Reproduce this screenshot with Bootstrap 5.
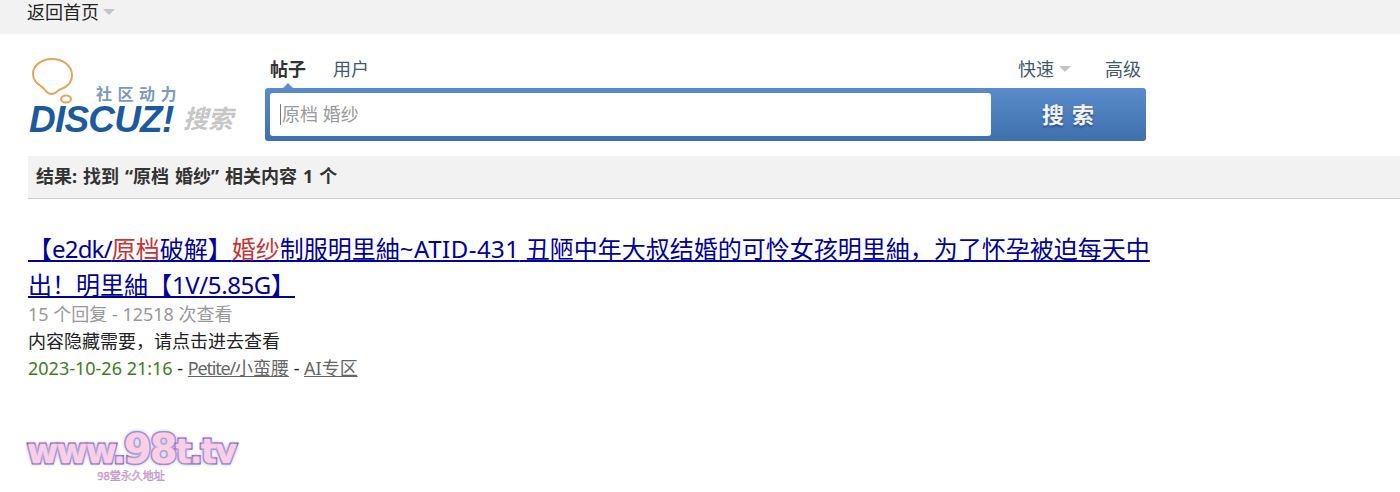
<!DOCTYPE html>
<html lang="zh">
<head>
    <meta charset="UTF-8">
    <meta name="viewport" content="width=device-width, initial-scale=1.0">
    <title>搜索</title>
    <link href="https://cdn.jsdelivr.net/npm/bootstrap@5.3.0/dist/css/bootstrap.min.css" rel="stylesheet">
    <style>
        body { font-family: "Noto Sans", "Noto Sans CJK SC", sans-serif; background: #fff; color: #000; overflow: hidden; }
        .top-strip { height: 34px; background: #f2f2f2; padding-left: 27px; font-size: 18px; line-height: 25px; }
        .top-strip a { color: #222; text-decoration: none; }
        .caret-down { display: inline-block; width: 0; height: 0; border: 6px solid transparent; border-top: 6px solid #c4c4c4; border-bottom: 0; vertical-align: 4px; margin-left: 4px; }
        .head-row { padding: 20px 0 0 28px; height: 122px; }
        .logo-box { width: 237px; height: 84px; position: relative; }
        .logo-box svg { position: absolute; left: 3px; top: 3px; }
        .logo-slogan { position: absolute; left: 68px; top: 30px; font-size: 16px; letter-spacing: 5.5px; color: #7b9bc0; line-height: 20px; white-space: nowrap; font-weight: 700; }
        .logo-word { position: absolute; left: 1px; top: 44px; font-family: "Liberation Sans", sans-serif; font-size: 37px; font-weight: 700; font-style: italic; color: #1c5aa0; line-height: 44px; letter-spacing: -0.8px; }
        .logo-sub { position: absolute; left: 155px; top: 47px; font-size: 25px; font-style: italic; font-weight: 700; color: #c6c6c6; line-height: 34px; }
        .search-area { width: 881px; }
        .tab-row { height: 34px; padding-left: 5px; font-size: 18px; line-height: 30px; position: relative; }
        .tab-row a { text-decoration: none; color: #44586c; }
        .tab-row a.is-on { color: #333; font-weight: 700; position: relative; margin-right: 27px; }
        .tab-row a.is-on::after { content: ""; position: absolute; left: 13px; bottom: -7px; border: 5px solid transparent; border-bottom: 5px solid #5f90c8; border-top: 0; }
        .tab-extra { padding-right: 5px; gap: 34px; }
        .tab-extra .caret-down { margin-left: 5px; }
        .search-box { height: 53px; background: linear-gradient(#5a8ccb, #3f70ae); border-radius: 3px; padding: 5px 0 5px 5px; }
        .search-input { width: 721px; height: 43px; padding-left: 10px; font-size: 18px; color: #999; background: #fff; border-radius: 3px; line-height: 43px; }
        .search-cursor { display: inline-block; width: 1px; height: 21px; background: #777; vertical-align: -4px; margin-right: 1px; }
        .search-btn { flex: 1; background: none; border: 0; color: #f2f2f2; font-size: 22px; font-weight: 700; letter-spacing: 8px; text-shadow: 0 2px 2px #2d5488; padding: 0 0 0 7px; }
        .result-bar { margin-left: 28px; height: 43px; background: #f2f2f2; border-bottom: 1px solid #ccc; padding-left: 8px; font-size: 18px; font-weight: 700; color: #333; line-height: 41px; word-spacing: 1.3px; }
        .result-item { width: 1125px; margin: 32px 0 0 28px; }
        .result-title { font-size: 24px; line-height: 36px; margin: 0; font-weight: 400; }
        .result-title a { color: #00009c; text-decoration: underline; }
        .result-title em { color: #c93333; font-style: normal; }
        .tight-code { letter-spacing: -0.8px; }
        .tight-size { letter-spacing: -0.4px; }
        .tight-name { letter-spacing: -1.2px; }
        .wide-code { letter-spacing: 0.5px; }
        .result-line { font-size: 18px; line-height: 27px; margin: 0; color: #222; }
        .result-meta { color: #999; margin-top: -2px; }
        .result-date { color: #3f7d1e; }
        .result-line a { color: #666; }
        .site-mark { margin: 48px 0 0 25px; width: 212px; text-align: center; line-height: 1; }
        .site-url { font-family: "DejaVu Sans", sans-serif; font-weight: 700; font-size: 34px; letter-spacing: -2px; color: #fbcfe3; -webkit-text-stroke: 3px #84478f; paint-order: stroke fill; text-shadow: 0 0 3px #b9b4f0, 0 0 4px #b9b4f0, 0 0 5px #b9b4f0; line-height: 38px; white-space: nowrap; }
        .site-url b { font-size: 40px; }
        .site-note { font-size: 11px; color: #f0bcd8; -webkit-text-stroke: 0.4px #b48ac8; line-height: 11px; }
    </style>
</head>
<body>
    <div class="top-strip">
        <a href="#">返回首页</a><span class="caret-down"></span>
    </div>

    <div class="head-row d-flex">
        <div class="logo-box">
            <svg width="48" height="52" viewBox="0 0 48 52" fill="none" stroke="#e2a55c" stroke-width="2">
                <path d="M14 33c-2-4-12-6-12-16C2 8 11 2 21 2s20 6 20 16c0 8-5 12-11 14-5 2-5 5-9 5-3 0-5-1-7-4z"/>
                <ellipse cx="35" cy="42" rx="5" ry="3.5"/>
            </svg>
            <span class="logo-slogan">社区动力</span>
            <span class="logo-word">DISCUZ!</span>
            <span class="logo-sub">搜索</span>
        </div>
        <div class="search-area">
            <div class="tab-row d-flex justify-content-between">
                <div><a class="is-on" href="#">帖子</a><a href="#">用户</a></div>
                <div class="tab-extra d-flex">
                    <div><a href="#">快速</a><span class="caret-down"></span></div>
                    <a href="#">高级</a>
                </div>
            </div>
            <div class="search-box d-flex">
                <div class="search-input"><span class="search-cursor"></span>原档 婚纱</div>
                <button class="search-btn" type="button">搜索</button>
            </div>
        </div>
    </div>

    <div class="result-bar">结果: 找到 “原档 婚纱” 相关内容 1 个</div>

    <div class="result-item">
        <h3 class="result-title"><a href="#">【<span class="tight-code">e2dk/</span><em>原档</em>破解】<em>婚纱</em>制服明里紬<span class="wide-code">~ATID-431</span> 丑陋中年大叔结婚的可怜女孩明里紬，为了怀孕被迫每天中出！明里紬【<span class="tight-size">1V/5.85G</span>】</a></h3>
        <p class="result-line result-meta">15 个回复 - 12518 次查看</p>
        <p class="result-line">内容隐藏需要，请点击进去查看</p>
        <p class="result-line"><span class="result-date">2023-10-26 21:16</span> - <a href="#"><span class="tight-name">Petite/</span>小蛮腰</a> - <a href="#">AI专区</a></p>
    </div>

    <div class="site-mark">
        <div class="site-url">www.<b>98</b>t.tv</div>
        <div class="site-note">98堂永久地址</div>
    </div>

    <script src="https://cdn.jsdelivr.net/npm/bootstrap@5.3.0/dist/js/bootstrap.bundle.min.js"></script>
</body>
</html>
